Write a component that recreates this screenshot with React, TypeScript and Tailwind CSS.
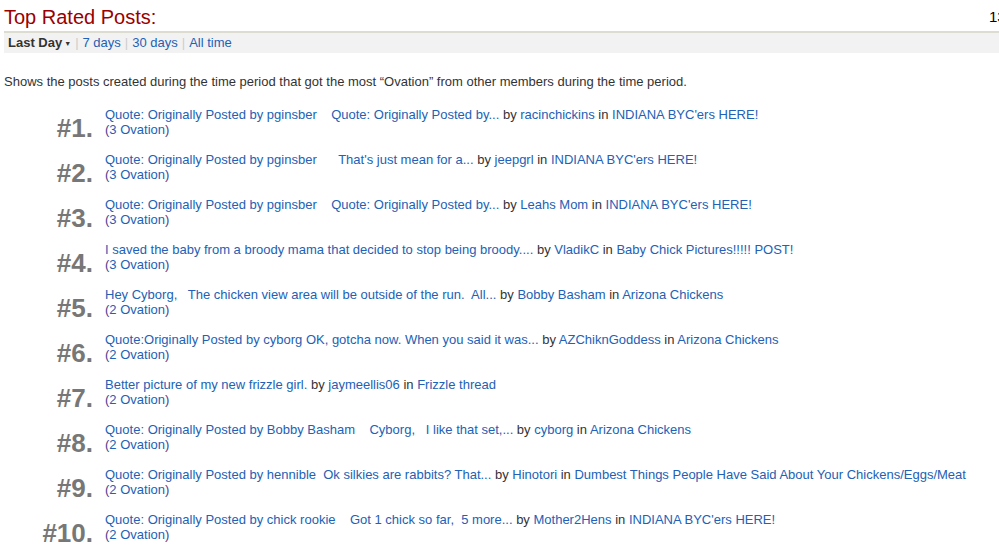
import React from "react";

type Post = {
  title: string;
  author: string;
  thread: string;
  ovation: number;
};

const posts: Post[] = [
  { title: "Quote: Originally Posted by pginsber    Quote: Originally Posted by...", author: "racinchickins", thread: "INDIANA BYC'ers HERE!", ovation: 3 },
  { title: "Quote: Originally Posted by pginsber      That's just mean for a...", author: "jeepgrl", thread: "INDIANA BYC'ers HERE!", ovation: 3 },
  { title: "Quote: Originally Posted by pginsber    Quote: Originally Posted by...", author: "Leahs Mom", thread: "INDIANA BYC'ers HERE!", ovation: 3 },
  { title: "I saved the baby from a broody mama that decided to stop being broody....", author: "VladikC", thread: "Baby Chick Pictures!!!!! POST!", ovation: 3 },
  { title: "Hey Cyborg,   The chicken view area will be outside of the run.  All...", author: "Bobby Basham", thread: "Arizona Chickens", ovation: 2 },
  { title: "Quote:Originally Posted by cyborg OK, gotcha now. When you said it was...", author: "AZChiknGoddess", thread: "Arizona Chickens", ovation: 2 },
  { title: "Better picture of my new frizzle girl.", author: "jaymeellis06", thread: "Frizzle thread", ovation: 2 },
  { title: "Quote: Originally Posted by Bobby Basham    Cyborg,   I like that set,...", author: "cyborg", thread: "Arizona Chickens", ovation: 2 },
  { title: "Quote: Originally Posted by hennible  Ok silkies are rabbits? That...", author: "Hinotori", thread: "Dumbest Things People Have Said About Your Chickens/Eggs/Meat", ovation: 2 },
  { title: "Quote: Originally Posted by chick rookie    Got 1 chick so far,  5 more...", author: "Mother2Hens", thread: "INDIANA BYC'ers HERE!", ovation: 2 },
];

function PostRow({ post, rank }: { post: Post; rank: number }) {
  return (
    <li className="flex items-end mb-[15px]">
      <div className="w-[89px] shrink-0 text-right font-bold text-[26px] leading-[26px] text-[#777777] mb-[-4px]">
        #{rank}.
      </div>
      <div className="ml-3 text-[13px] leading-[15px]">
        <div className="whitespace-pre">
          <a href="#" className="text-[#2261b5]">{post.title}</a>
          <span className="text-[#333333]"> by </span>
          <a href="#" className="text-[#2261b5]">{post.author}</a>
          <span className="text-[#333333]"> in </span>
          <a href="#" className="text-[#2261b5]">{post.thread}</a>
        </div>
        <div>
          <span className="text-[#4a3d8f]">(</span>
          <a href="#" className="text-[#2261b5]">{post.ovation} Ovation</a>
          <span className="text-[#4a3d8f]">)</span>
        </div>
      </div>
    </li>
  );
}

export default function App() {
  return (
    <div className="w-[999px] h-[558px] overflow-hidden bg-white pl-1 text-[#333333]" style={{ fontFamily: '"Liberation Sans", Arial, sans-serif' }}>
      {/* header */}
      <div className="flex items-start pt-[5px] h-[31px]">
        <h1 className="text-[20px] leading-[24px] text-[#990000]">Top Rated Posts:</h1>
        <div className="flex-1" />
        <div className="w-[10px] overflow-hidden whitespace-nowrap text-[15px] leading-[24px] text-black">13</div>
      </div>

      {/* period filter */}
      <div className="h-[22px] border-t-2 border-[#dcdcd0] bg-[#f2f2f2] flex items-center pl-1 text-[13px]">
        <span className="font-bold text-[#333333] flex items-center">
          Last Day
          <span className="ml-[2px] text-[7px] leading-none">▼</span>
        </span>
        <span className="mx-[4px] text-[#cccccc]">|</span>
        <a href="#" className="text-[#2261b5]">7 days</a>
        <span className="mx-[4px] text-[#cccccc]">|</span>
        <a href="#" className="text-[#2261b5]">30 days</a>
        <span className="mx-[4px] text-[#cccccc]">|</span>
        <a href="#" className="text-[#2261b5]">All time</a>
      </div>

      <p className="mt-[21px] text-[13px] leading-[15px] text-[#333333]">
        Shows the posts created during the time period that got the most “Ovation” from other members during the time period.
      </p>

      <ol className="mt-[18px]">
        {posts.map((p, i) => (
          <PostRow key={i} post={p} rank={i + 1} />
        ))}
      </ol>
    </div>
  );
}
